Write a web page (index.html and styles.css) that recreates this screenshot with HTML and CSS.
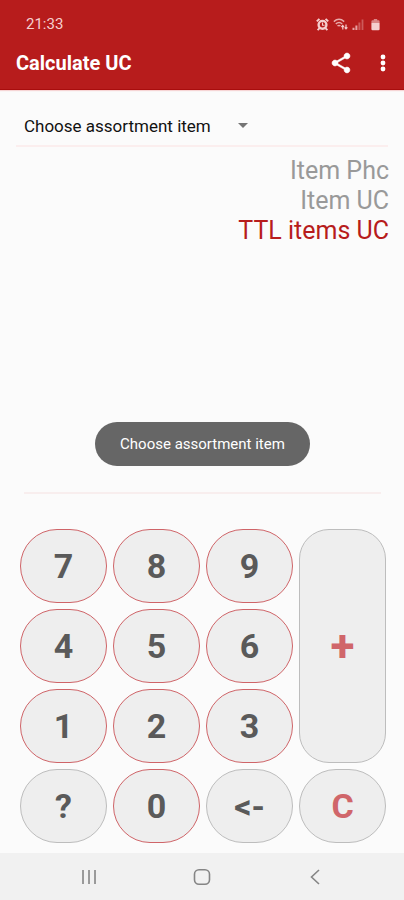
FILE: index.html
```html
<!DOCTYPE html>
<html lang="en">
<head>
  <meta charset="UTF-8">
  <meta name="viewport" content="width=device-width, initial-scale=1.0">
  <title>Calculate UC</title>
  <link rel="stylesheet" href="styles.css">
</head>
<body>

  <header class="header">
    <div class="status-bar">
      <span class="clock">21:33</span>
      <div class="status-icons">
        <!-- alarm -->
        <svg width="13" height="13" viewBox="0 0 13 13" fill="none" stroke="currentColor">
          <circle cx="6.5" cy="6.8" r="3.9" stroke-width="2.4"/>
          <path d="M6.5 4.6V7.2H8.6" stroke-width="1.1"/>
          <path d="M.8 3.4L3.4 .8M12.2 3.4L9.6 .8M1.6 12.2L3.6 10.2M11.4 12.2L9.4 10.2" stroke-width="1.9"/>
        </svg>
        <!-- wifi -->
        <svg width="15" height="13" viewBox="0 0 15 13" fill="none" stroke="currentColor">
          <path d="M.8 3.6C4 .8 8 .8 11.2 3.6M2.8 5.9C5 4 7.2 4 9.2 5.9M4.5 8.1C5.5 7.2 6.5 7.2 7.5 8.1" stroke-width="1.4" opacity=".8"/>
          <path d="M9.8 11.5V7.5M8.4 9L9.8 7.4L11 9M13 6.5V10.8M11.7 9.3L13 10.8L14.4 9.3" stroke-width="1.2"/>
        </svg>
        <!-- signal -->
        <svg width="12" height="13" viewBox="0 0 12 13" fill="currentColor">
          <path d="M.5 9.8H2.5V12H.5zM3.4 7.5H5.4V12H3.4z" opacity=".75"/>
          <path d="M6.4 4.5H8.4V12H6.4zM9.6 1.5H11.4V12H9.6z" opacity=".35"/>
        </svg>
        <!-- battery -->
        <svg class="battery" width="9" height="13" viewBox="0 0 9 13" fill="currentColor">
          <path d="M2.8 1H6.2V2.3H7.4Q8.6 2.3 8.6 3.5V5H.4V3.5Q.4 2.3 1.6 2.3H2.8z" opacity=".6"/>
          <path d="M.4 5H8.6V11Q8.6 12.2 7.4 12.2H1.6Q.4 12.2 .4 11z"/>
        </svg>
      </div>
    </div>
    <div class="app-bar">
      <h1 class="title">Calculate UC</h1>
      <button class="icon-btn" aria-label="Share">
        <svg width="24" height="24" viewBox="0 0 24 24" fill="currentColor" stroke="currentColor" stroke-width=".5">
          <path d="M18 16.08c-.76 0-1.44.3-1.96.77L8.91 12.7c.05-.23.09-.46.09-.7s-.04-.47-.09-.7l7.05-4.11c.54.5 1.25.81 2.04.81 1.66 0 3-1.34 3-3s-1.34-3-3-3-3 1.34-3 3c0 .24.04.47.09.7L8.04 9.81C7.5 9.31 6.79 9 6 9c-1.66 0-3 1.34-3 3s1.34 3 3 3c.79 0 1.5-.31 2.04-.81l7.12 4.16c-.05.21-.08.43-.08.65 0 1.61 1.31 2.92 2.92 2.92s2.92-1.31 2.92-2.92-1.31-2.92-2.92-2.92z"/>
        </svg>
      </button>
      <button class="icon-btn" aria-label="More options">
        <svg width="24" height="24" viewBox="0 0 24 24" fill="currentColor">
          <circle cx="12" cy="6" r="2.4"/>
          <circle cx="12" cy="12" r="2.4"/>
          <circle cx="12" cy="18" r="2.4"/>
        </svg>
      </button>
    </div>
  </header>

  <main class="content">
    <div class="picker">
      <select class="item-select" aria-label="Assortment item">
        <option>Choose assortment item</option>
      </select>
      <svg class="arrow" width="10" height="5" viewBox="0 0 10 5" fill="currentColor"><path d="M0 0H10L5 5z"/></svg>
    </div>

    <div class="results">
      <p>Item Phc</p>
      <p>Item UC</p>
      <p class="total">TTL items UC</p>
    </div>

    <div class="toast-area">
      <div class="toast" role="status">Choose assortment item</div>
    </div>

    <div class="keypad">
      <button class="key">7</button>
      <button class="key">8</button>
      <button class="key">9</button>
      <button class="key action red tall">+</button>
      <button class="key">4</button>
      <button class="key">5</button>
      <button class="key">6</button>
      <button class="key">1</button>
      <button class="key">2</button>
      <button class="key">3</button>
      <button class="key action">?</button>
      <button class="key">0</button>
      <button class="key action">&lt;-</button>
      <button class="key action red">C</button>
    </div>
  </main>

  <nav class="nav-bar">
    <button class="nav-btn" aria-label="Recent apps">
      <svg width="18" height="18" viewBox="0 0 18 18" fill="none" stroke="currentColor" stroke-width="1.6"><path d="M3 2V16M9 2V16M15 2V16"/></svg>
    </button>
    <button class="nav-btn" aria-label="Home">
      <svg width="18" height="18" viewBox="0 0 18 18" fill="none" stroke="currentColor" stroke-width="1.6"><rect x="1.5" y="1.8" width="15" height="14.4" rx="4.5"/></svg>
    </button>
    <button class="nav-btn" aria-label="Back">
      <svg width="18" height="18" viewBox="0 0 18 18" fill="none" stroke="currentColor" stroke-width="1.6"><path d="M13 2L5.5 9L13 16"/></svg>
    </button>
  </nav>

</body>
</html>
```
FILE: styles.css
```css
* {
  margin: 0;
  padding: 0;
  box-sizing: border-box;
}

body {
  min-height: 100vh;
  display: flex;
  flex-direction: column;
  font-family: Roboto, sans-serif;
  background-color: #fbfbfb;
}

button {
  border: none;
  background: none;
  font-family: inherit;
  cursor: pointer;
}

svg {
  display: block;
}

/* header */
.header {
  background-color: #b71c1c;
  color: #fff;
  padding-top: 12px;
  border-bottom: 1px solid #a80d0d;
  box-shadow: 0 1px 1px #f6d5d5;
}

.status-bar {
  display: flex;
  justify-content: space-between;
  align-items: center;
  height: 24px;
  padding: 0 24px 0 26px;
  color: #f5cfcf;
}

.clock {
  font-size: 15px;
}

.status-icons {
  display: flex;
  align-items: center;
  gap: 4px;
}

.battery {
  margin-left: 3px;
}

.app-bar {
  display: flex;
  align-items: center;
  height: 53px;
  padding: 0 9px 0 16px;
}

.title {
  flex: 1;
  font-size: 20px;
  font-weight: 700;
}

.icon-btn {
  color: #fff;
}

.icon-btn + .icon-btn {
  margin-left: 18px;
}

/* content */
.content {
  flex: 1;
  display: flex;
  flex-direction: column;
}

.picker {
  display: flex;
  align-items: center;
  margin: 0 16px;
  padding: 16px 8px 0;
  height: 57px;
  border-bottom: 2px solid #fbeeee;
}

.item-select {
  appearance: none;
  height: 40px;
  width: 240px;
  margin-right: -26px;
  border: none;
  background: none;
  font-family: inherit;
  font-size: 17px;
  color: #111;
}

.arrow {
  color: #757575;
  pointer-events: none;
}

.results {
  padding: 9px 15px 0;
  text-align: right;
  font-size: 25px;
  line-height: 30px;
  color: #999;
}

.results .total {
  color: #b71c1c;
}

.toast-area {
  flex: 1;
  display: flex;
  justify-content: center;
  align-items: flex-end;
  margin: 0 23px 0 24px;
  padding-bottom: 26px;
  border-bottom: 2px solid #f8eeee;
}

.toast {
  padding: 12px 25px;
  border-radius: 22px;
  background-color: #666;
  color: #fff;
  font-size: 15px;
  line-height: 20px;
}

/* keypad */
.keypad {
  display: grid;
  grid-template-columns: repeat(4, 1fr);
  grid-auto-rows: 74px;
  gap: 6px;
  padding: 35px 18px 10px 20px;
}

.key {
  border: 1px solid #cf6468;
  border-radius: 37px;
  background-color: #eee;
  color: #5a5a5a;
  font-size: 34px;
  font-weight: 700;
}

.action {
  border-color: #bdbdbd;
}

.red {
  color: #d0666a;
}

.tall {
  grid-row: span 3;
  border-radius: 30px;
  font-size: 44px;
}

/* bottom navigation */
.nav-bar {
  display: flex;
  justify-content: center;
  gap: 95px;
  padding: 15px 0 14px;
  background-color: #f1f1f1;
}

.nav-btn {
  color: #858585;
}
```
